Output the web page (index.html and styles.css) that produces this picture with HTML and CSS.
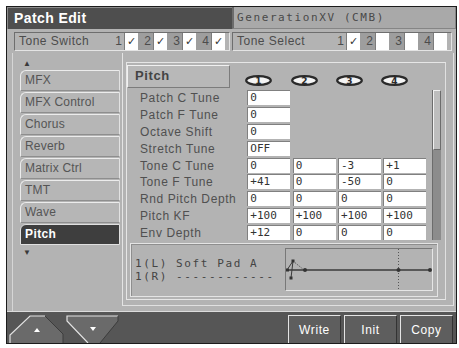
FILE: index.html
```html
<!DOCTYPE html>
<html lang="en">
<head>
    <meta charset="UTF-8">
    <meta name="viewport" content="width=device-width, initial-scale=1.0">
    <title>Patch Edit</title>
    <link rel="stylesheet" href="styles.css">
</head>
<body>

    <div class="screen">
        <header class="titlebar">
            <div class="title">Patch Edit</div>
            <div class="patch-name">GenerationXV (CMB)</div>
        </header>

        <div class="toolbar">
            <div class="tone-box">
                <span class="tone-label">Tone Switch</span>
                <span class="num">1</span><span class="chk">&#10003;</span>
                <span class="num dim">2</span><span class="chk">&#10003;</span>
                <span class="num dim">3</span><span class="chk">&#10003;</span>
                <span class="num dim">4</span><span class="chk">&#10003;</span>
            </div>
            <div class="tone-box select">
                <span class="tone-label">Tone Select</span>
                <span class="num">1</span><span class="chk">&#10003;</span>
                <span class="num dim">2</span><span class="chk"></span>
                <span class="num dim">3</span><span class="chk"></span>
                <span class="num dim">4</span><span class="chk"></span>
            </div>
        </div>

        <div class="main">
            <nav class="tabs">
                <div class="arrow">&#9650;</div>
                <div class="tab">MFX</div>
                <div class="tab">MFX Control</div>
                <div class="tab">Chorus</div>
                <div class="tab">Reverb</div>
                <div class="tab">Matrix Ctrl</div>
                <div class="tab">TMT</div>
                <div class="tab">Wave</div>
                <div class="tab active">Pitch</div>
                <div class="arrow">&#9660;</div>
            </nav>

            <section class="panel">
                <div class="panel-inner">
                    <div class="params">
                        <div class="group-title">Pitch</div>
                        <svg class="tone-icon" width="27" height="11" viewBox="0 0 27 11"><ellipse cx="13.5" cy="5.5" rx="12.3" ry="4.4" fill="#f4f4f4" stroke="#2a2a2a" stroke-width="2.2"/><text x="13.5" y="9" text-anchor="middle" font-size="9" font-weight="bold" font-family="DejaVu Sans" fill="#2a2a2a">1</text></svg>
                        <svg class="tone-icon" width="27" height="11" viewBox="0 0 27 11"><ellipse cx="13.5" cy="5.5" rx="12.3" ry="4.4" fill="#f4f4f4" stroke="#2a2a2a" stroke-width="2.2"/><text x="13.5" y="9" text-anchor="middle" font-size="9" font-weight="bold" font-family="DejaVu Sans" fill="#2a2a2a">2</text></svg>
                        <svg class="tone-icon" width="27" height="11" viewBox="0 0 27 11"><ellipse cx="13.5" cy="5.5" rx="12.3" ry="4.4" fill="#f4f4f4" stroke="#2a2a2a" stroke-width="2.2"/><text x="13.5" y="9" text-anchor="middle" font-size="9" font-weight="bold" font-family="DejaVu Sans" fill="#2a2a2a">3</text></svg>
                        <svg class="tone-icon" width="27" height="11" viewBox="0 0 27 11"><ellipse cx="13.5" cy="5.5" rx="12.3" ry="4.4" fill="#f4f4f4" stroke="#2a2a2a" stroke-width="2.2"/><text x="13.5" y="9" text-anchor="middle" font-size="9" font-weight="bold" font-family="DejaVu Sans" fill="#2a2a2a">4</text></svg>
                        <div class="scrollbar"><div class="thumb"></div></div>

                        <span class="label">Patch C Tune</span><span class="val">0</span><span></span><span></span><span></span>
                        <span class="label">Patch F Tune</span><span class="val">0</span><span></span><span></span><span></span>
                        <span class="label">Octave Shift</span><span class="val">0</span><span></span><span></span><span></span>
                        <span class="label">Stretch Tune</span><span class="val">OFF</span><span></span><span></span><span></span>
                        <span class="label">Tone C Tune</span><span class="val">0</span><span class="val">0</span><span class="val">-3</span><span class="val">+1</span>
                        <span class="label">Tone F Tune</span><span class="val">+41</span><span class="val">0</span><span class="val">-50</span><span class="val">0</span>
                        <span class="label">Rnd Pitch Depth</span><span class="val">0</span><span class="val">0</span><span class="val">0</span><span class="val">0</span>
                        <span class="label">Pitch KF</span><span class="val">+100</span><span class="val">+100</span><span class="val">+100</span><span class="val">+100</span>
                        <span class="label">Env Depth</span><span class="val">+12</span><span class="val">0</span><span class="val">0</span><span class="val">0</span>
                    </div>

                    <div class="wave-box">
                        <div class="wave-names">
                            <div>1(L) Soft Pad A</div>
                            <div>1(R) ------------</div>
                        </div>
                        <div class="graph">
                            <svg width="146" height="41" viewBox="0 0 146 41">
                                <line x1="112.5" y1="0" x2="112.5" y2="41" stroke="#555" stroke-dasharray="1 2"/>
                                <line x1="1" y1="21" x2="145" y2="21" stroke="#3a3a3a" stroke-width="1.4"/>
                                <polyline points="1,21 7,12 5,29" fill="none" stroke="#3a3a3a" stroke-width="1"/>
                                <line x1="7" y1="12" x2="18" y2="21" stroke="#3a3a3a" stroke-dasharray="1 1.5"/>
                                <rect x="0" y="19.5" width="3" height="3" fill="#333"/>
                                <rect x="5.5" y="10.5" width="3" height="3" fill="#333"/>
                                <rect x="3.5" y="27.5" width="3" height="3" fill="#333"/>
                                <circle cx="19" cy="21" r="2" fill="#333"/>
                                <circle cx="112.5" cy="21" r="2" fill="#333"/>
                                <circle cx="144" cy="21" r="2" fill="#333"/>
                            </svg>
                        </div>
                    </div>
                </div>
            </section>
        </div>

        <footer class="bottom">
            <svg class="nav" width="120" height="31" viewBox="0 0 120 31">
                <polygon points="3,31 3,23 23,4 38,4 56,22 56,31" fill="#6a6a6a"/>
                <polyline points="3,31 3,23 23,4 38,4" fill="none" stroke="#e2e2e2" stroke-width="1.2"/>
                <polyline points="38,4 56,22 56,31" fill="none" stroke="#3c3c3c" stroke-width="1"/>
                <polygon points="27,20 33,20 30,16" fill="#fff"/>
                <polygon points="60,4 111,4 111,9 93,31 81,31 60,9" fill="#6a6a6a"/>
                <polyline points="81,31 60,9 60,4 111,4" fill="none" stroke="#e2e2e2" stroke-width="1.2"/>
                <polyline points="111,4 111,9 93,31" fill="none" stroke="#3c3c3c" stroke-width="1"/>
                <polygon points="83,15 89,15 86,19" fill="#fff"/>
            </svg>
            <div class="actions">
                <button class="btn">Write</button>
                <button class="btn">Init</button>
                <button class="btn">Copy</button>
            </div>
        </footer>
    </div>

</body>
</html>
```

FILE: styles.css
```css
* {
    margin: 0;
    padding: 0;
    box-sizing: border-box;
}

body {
    background-color: #fff;
    padding: 6px 0 0 6px;
    font-family: "Liberation Sans", Arial, sans-serif;
    color: #4c4c4c;
}

.screen {
    width: 451px;
    height: 338px;
    border: 1px solid #1c1c1c;
    background: #b3b3b3;
    display: flex;
    flex-direction: column;
}

/* title bar */
.titlebar {
    height: 22px;
    display: flex;
}

.title {
    width: 225px;
    background: #4e4e4e;
    color: #fff;
    font-size: 14px;
    font-weight: bold;
    letter-spacing: 0.4px;
    line-height: 21px;
    padding-left: 6px;
    border-top: 1px solid #8c8c8c;
    border-left: 1px solid #8c8c8c;
}

.patch-name {
    flex: 1;
    background: #a9a9a9;
    border-left: 2px solid #6c6c6c;
    border-bottom: 1px solid #858585;
    border-right: 1px solid #858585;
    font-family: "DejaVu Sans Mono", monospace;
    font-size: 11px;
    letter-spacing: 1.6px;
    line-height: 21px;
    padding-left: 3px;
    color: #4a4a4a;
}

/* tone switch / select */
.toolbar {
    height: 24px;
    display: flex;
    gap: 2px;
    padding: 3px 4px 2px 7px;
}

.tone-box {
    width: 216px;
    display: flex;
    border-top: 1px solid #6e6e6e;
    border-left: 1px solid #6e6e6e;
    border-bottom: 1px solid #e4e4e4;
    border-right: 1px solid #e4e4e4;
    padding-right: 4px;
    font-size: 12px;
    line-height: 17px;
}

.tone-box.select {
    flex: 1;
    width: auto;
}

.tone-label {
    flex: 1;
    padding-left: 4px;
    letter-spacing: 0.5px;
}

.num {
    width: 15px;
    text-align: right;
    padding-right: 2px;
}

.num.dim {
    background: #9e9e9e;
}

.chk {
    width: 14px;
    background: #fff;
    border-left: 1px solid #7c7c7c;
    color: #333;
    font-family: "DejaVu Sans", sans-serif;
    font-size: 11px;
    text-align: center;
}

/* main area */
.main {
    height: 258px;
    display: flex;
}

.tabs {
    width: 110px;
    margin-left: 5px;
    border-left: 1px solid #d6d6d6;
    padding: 6px 2px 0 7px;
    display: flex;
    flex-direction: column;
}

.arrow {
    height: 11px;
    font-size: 8px;
    line-height: 10px;
    padding-left: 3px;
    color: #3a3a3a;
}

.tab {
    height: 21px;
    margin-bottom: 1px;
    background: #b6b6b6;
    border-top: 1px solid #ececec;
    border-left: 1px solid #ececec;
    border-right: 1px solid #e2e2e2;
    border-bottom: 1px solid #8e8e8e;
    border-top-left-radius: 6px;
    font-size: 12px;
    letter-spacing: 0.2px;
    line-height: 19px;
    padding-left: 4px;
    color: #555;
}

.tab.active {
    background: #3e3e3e;
    color: #fff;
    font-weight: bold;
    letter-spacing: 0.4px;
    border-color: #e0e0e0;
}

.tabs .arrow:last-child {
    margin-top: 2px;
}

.panel {
    flex: 1;
    border-left: 1px solid #e4e4e4;
    border-right: 1px solid #e0e0e0;
    padding: 9px 7px 5px 3px;
    border-bottom: 1px solid #e0e0e0;
    margin-bottom: 5px;
    margin-right: 2px;
}

.panel-inner {
    height: 238px;
    border: 1px solid #e6e6e6;
    border-right-color: #e0e0e0;
}

.params {
    display: grid;
    grid-template-columns: 118px repeat(4, 43px) 12px;
    grid-template-rows: 27px repeat(9, 16.875px);
    column-gap: 2.33px;
}

.group-title {
    width: 103px;
    height: 23px;
    margin-top: 2px;
    background: #b8b8b8;
    border-top: 1px solid #f0f0f0;
    border-left: 1px solid #f0f0f0;
    border-bottom: 1px solid #7c7c7c;
    border-right: 1px solid #7c7c7c;
    font-size: 13px;
    font-weight: bold;
    letter-spacing: 0.6px;
    line-height: 20px;
    padding-left: 7px;
    color: #444;
}

.tone-icon {
    align-self: end;
    margin: 0 0 4px -2px;
}

.scrollbar {
    grid-column: 6;
    grid-row: 2 / span 9;
    width: 9px;
    height: 150px;
    justify-self: end;
    background: #8c8c8c;
    border-left: 1px solid #6c6c6c;
}

.thumb {
    height: 60px;
    background: #bdbdbd;
    border: 1px solid #f0f0f0;
    border-right-color: #6c6c6c;
    border-bottom-color: #6c6c6c;
}

.label {
    grid-column: 1;
    font-size: 12px;
    letter-spacing: 0.6px;
    line-height: 16px;
    padding-left: 13px;
    color: #505050;
    white-space: nowrap;
}

.val {
    height: 15px;
    background: #fff;
    border-top: 1px solid #808080;
    border-left: 1px solid #808080;
    font-family: "DejaVu Sans Mono", monospace;
    font-size: 11px;
    line-height: 14px;
    padding-left: 2px;
    color: #333;
}

/* waveform info */
.wave-box {
    height: 54px;
    margin: 1px 7px 0 3px;
    border: 1px solid #e4e4e4;
    box-shadow: inset 1px 1px 0 #8e8e8e;
    display: flex;
    align-items: center;
}

.wave-names {
    width: 154px;
    padding-left: 4px;
    font-family: "DejaVu Sans Mono", monospace;
    font-size: 11px;
    letter-spacing: 1.6px;
    line-height: 13px;
    color: #444;
    white-space: nowrap;
}

.graph {
    width: 148px;
    height: 43px;
    border-top: 1px solid #787878;
    border-left: 1px solid #787878;
    border-right: 1px solid #e6e6e6;
    border-bottom: 1px solid #e6e6e6;
}

.graph svg {
    display: block;
}

/* bottom bar */
.bottom {
    height: 32px;
    background: #565656;
    border-top: 1px solid #dcdcdc;
    display: flex;
    justify-content: space-between;
}

.nav {
    display: block;
}

.actions {
    display: flex;
    gap: 3px;
    padding: 3px 3px 0 0;
}

.btn {
    width: 53px;
    height: 28px;
    background: #5e5e5e;
    border: none;
    border-top: 1px solid #e4e4e4;
    border-left: 1px solid #e4e4e4;
    border-right: 1px solid #333;
    color: #fff;
    font-family: "Liberation Sans", Arial, sans-serif;
    font-size: 12px;
    letter-spacing: 0.6px;
}
```
